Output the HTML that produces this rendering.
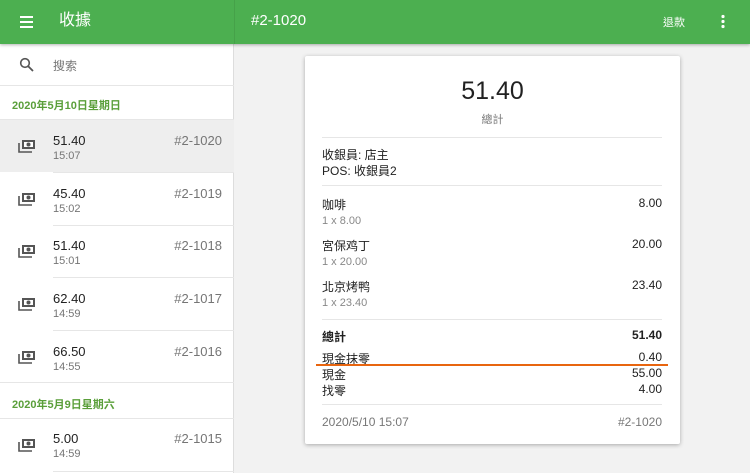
<!DOCTYPE html>
<html><head><meta charset="utf-8"><style>
*{margin:0;padding:0;box-sizing:border-box}
body{width:750px;height:473px;overflow:hidden;background:#f2f2f2;font-family:"Liberation Sans","Noto Sans CJK TC",sans-serif;position:relative;color:#212121}
.a{position:absolute;white-space:nowrap}
.hdr{position:absolute;left:0;top:0;width:750px;height:44px;background:#4caf50;box-shadow:0 1px 3px rgba(0,0,0,.3);z-index:2}
.left{position:absolute;left:0;top:44px;width:234px;height:429px;background:#fff;border-right:1px solid #ddd}
.date{color:#5a9f3a;font-size:11px;font-weight:bold}
.num{font-size:13px;color:#212121}
.time{font-size:11px;color:#757575}
.id{font-size:13px;color:#757575}
.card{position:absolute;left:305px;top:56px;width:375px;height:388px;background:#fff;box-shadow:0 1px 4px rgba(0,0,0,.3);border-radius:2px}
.hl{position:absolute;height:1px;background:#e6e6e6}
.c{font-size:12px;color:#212121}
.g{font-size:11px;color:#888}
.r{text-align:right}
.it{position:absolute;left:0;width:234px;height:52px}.it svg{position:absolute;left:18px;top:19px}
</style></head><body>
<div class="hdr">
<svg class="a" style="left:18px;top:14px" width="18" height="16" viewBox="0 0 18 16"><rect x="2" y="2" width="13" height="2" fill="#fff"/><rect x="2" y="7" width="13" height="2" fill="#fff"/><rect x="2" y="12" width="13" height="2" fill="#fff"/></svg>
<div class="a" style="left:59px;top:12px;font-size:16px;line-height:17px;color:#fff">收據</div>
<div class="a" style="left:234px;top:0;width:1px;height:44px;background:rgba(0,0,0,.08)"></div>
<div class="a" style="left:251px;top:12px;font-size:15px;color:#fff">#2-1020</div>
<div class="a" style="left:663px;top:14px;font-size:11px;color:#fff">退款</div>
<svg class="a" style="left:720px;top:14px" width="6" height="16"><circle cx="3" cy="2.5" r="1.6" fill="#fff"/><circle cx="3" cy="7.5" r="1.6" fill="#fff"/><circle cx="3" cy="12.5" r="1.6" fill="#fff"/></svg>
</div>
<div class="left">
<svg class="a" style="left:19px;top:13px" width="16" height="16" viewBox="0 0 16 16"><circle cx="6" cy="6" r="4.3" stroke="#555" stroke-width="1.6" fill="none"/><path d="M9.2 9.2L14 14" stroke="#555" stroke-width="1.8"/></svg>
<div class="a" style="left:53px;top:13px;font-size:12px;color:#757575">搜索</div>
<div class="hl" style="left:0;top:41px;width:234px"></div>
</div>
<div class="a date" style="left:12px;top:97px">2020年5月10日星期日</div>
<div class="hl" style="left:0;top:119px;width:234px"></div>
<div class="a" style="left:0;top:120px;width:234px;height:52px;background:#eee"></div>

<div class="hl" style="left:0;top:382px;width:234px"></div>
<div class="a date" style="left:12px;top:396px">2020年5月9日星期六</div>
<div class="hl" style="left:0;top:418px;width:234px"></div>

<div class="card">
<div class="a" style="left:0;width:375px;top:21px;text-align:center;font-size:25px;color:#212121">51.40</div>
<div class="a" style="left:0;width:375px;top:55px;text-align:center;font-size:11px;color:#777">總計</div>
<div class="hl" style="left:17px;top:81px;width:340px"></div>
<div class="a c" style="left:17px;top:90px">收銀員: 店主</div>
<div class="a c" style="left:17px;top:106px">POS: 收銀員2</div>
<div class="hl" style="left:17px;top:129px;width:340px"></div>
<div class="a c" style="left:17px;top:140px">咖啡</div><div class="a c r" style="right:18px;top:140px">8.00</div>
<div class="a g" style="left:17px;top:159px">1 x 8.00</div>
<div class="a c" style="left:17px;top:181px">宮保鸡丁</div><div class="a c r" style="right:18px;top:181px">20.00</div>
<div class="a g" style="left:17px;top:200px">1 x 20.00</div>
<div class="a c" style="left:17px;top:222px">北京烤鸭</div><div class="a c r" style="right:18px;top:222px">23.40</div>
<div class="a g" style="left:17px;top:241px">1 x 23.40</div>
<div class="hl" style="left:17px;top:263px;width:340px"></div>
<div class="a c" style="left:17px;top:272px;font-weight:bold">總計</div><div class="a c r" style="right:18px;top:272px;font-weight:bold">51.40</div>
<div class="a c" style="left:17px;top:294px">現金抹零</div><div class="a c r" style="right:18px;top:294px">0.40</div>
<div class="a c" style="left:17px;top:310px">現金</div><div class="a c r" style="right:18px;top:310px">55.00</div>
<div class="a c" style="left:17px;top:326px">找零</div><div class="a c r" style="right:18px;top:326px">4.00</div>
<div class="hl" style="left:17px;top:348px;width:340px"></div>
<div class="a" style="left:17px;top:359px;font-size:12px;color:#777">2020/5/10 15:07</div>
<div class="a r" style="right:18px;top:359px;font-size:12px;color:#777">#2-1020</div>
</div>
<div class="a" style="left:316px;top:364px;width:352px;height:2px;background:#e8650f"></div>

<div class="it" style="top:120px"><svg width="18" height="14" viewBox="0 0 18 14"><path d="M1 4v9h13" stroke="#555" stroke-width="1.6" fill="none"/><rect x="4" y="1" width="13" height="9" fill="#555"/><rect x="6" y="3" width="9" height="5" fill="#fff"/><circle cx="10.5" cy="5.5" r="2" fill="#555"/></svg><div class="a num" style="left:53px;top:13px">51.40</div><div class="a time" style="left:53px;top:30px">15:07</div><div class="a id" style="right:12px;top:13px">#2-1020</div></div>
<div class="hl" style="left:53px;top:172px;width:181px"></div>
<div class="it" style="top:173px"><svg width="18" height="14" viewBox="0 0 18 14"><path d="M1 4v9h13" stroke="#555" stroke-width="1.6" fill="none"/><rect x="4" y="1" width="13" height="9" fill="#555"/><rect x="6" y="3" width="9" height="5" fill="#fff"/><circle cx="10.5" cy="5.5" r="2" fill="#555"/></svg><div class="a num" style="left:53px;top:13px">45.40</div><div class="a time" style="left:53px;top:30px">15:02</div><div class="a id" style="right:12px;top:13px">#2-1019</div></div>
<div class="hl" style="left:53px;top:225px;width:181px"></div>
<div class="it" style="top:225px"><svg width="18" height="14" viewBox="0 0 18 14"><path d="M1 4v9h13" stroke="#555" stroke-width="1.6" fill="none"/><rect x="4" y="1" width="13" height="9" fill="#555"/><rect x="6" y="3" width="9" height="5" fill="#fff"/><circle cx="10.5" cy="5.5" r="2" fill="#555"/></svg><div class="a num" style="left:53px;top:13px">51.40</div><div class="a time" style="left:53px;top:30px">15:01</div><div class="a id" style="right:12px;top:13px">#2-1018</div></div>
<div class="hl" style="left:53px;top:277px;width:181px"></div>
<div class="it" style="top:278px"><svg width="18" height="14" viewBox="0 0 18 14"><path d="M1 4v9h13" stroke="#555" stroke-width="1.6" fill="none"/><rect x="4" y="1" width="13" height="9" fill="#555"/><rect x="6" y="3" width="9" height="5" fill="#fff"/><circle cx="10.5" cy="5.5" r="2" fill="#555"/></svg><div class="a num" style="left:53px;top:13px">62.40</div><div class="a time" style="left:53px;top:30px">14:59</div><div class="a id" style="right:12px;top:13px">#2-1017</div></div>
<div class="hl" style="left:53px;top:330px;width:181px"></div>
<div class="it" style="top:331px"><svg width="18" height="14" viewBox="0 0 18 14"><path d="M1 4v9h13" stroke="#555" stroke-width="1.6" fill="none"/><rect x="4" y="1" width="13" height="9" fill="#555"/><rect x="6" y="3" width="9" height="5" fill="#fff"/><circle cx="10.5" cy="5.5" r="2" fill="#555"/></svg><div class="a num" style="left:53px;top:13px">66.50</div><div class="a time" style="left:53px;top:30px">14:55</div><div class="a id" style="right:12px;top:13px">#2-1016</div></div>
<div class="it" style="top:419px"><svg width="18" height="14" viewBox="0 0 18 14"><path d="M1 4v9h13" stroke="#555" stroke-width="1.6" fill="none"/><rect x="4" y="1" width="13" height="9" fill="#555"/><rect x="6" y="3" width="9" height="5" fill="#fff"/><circle cx="10.5" cy="5.5" r="2" fill="#555"/></svg><div class="a num" style="left:53px;top:12px">5.00</div><div class="a time" style="left:53px;top:29px">14:59</div><div class="a id" style="right:12px;top:12px">#2-1015</div></div>
<div class="hl" style="left:53px;top:471px;width:181px"></div>
</body></html>
